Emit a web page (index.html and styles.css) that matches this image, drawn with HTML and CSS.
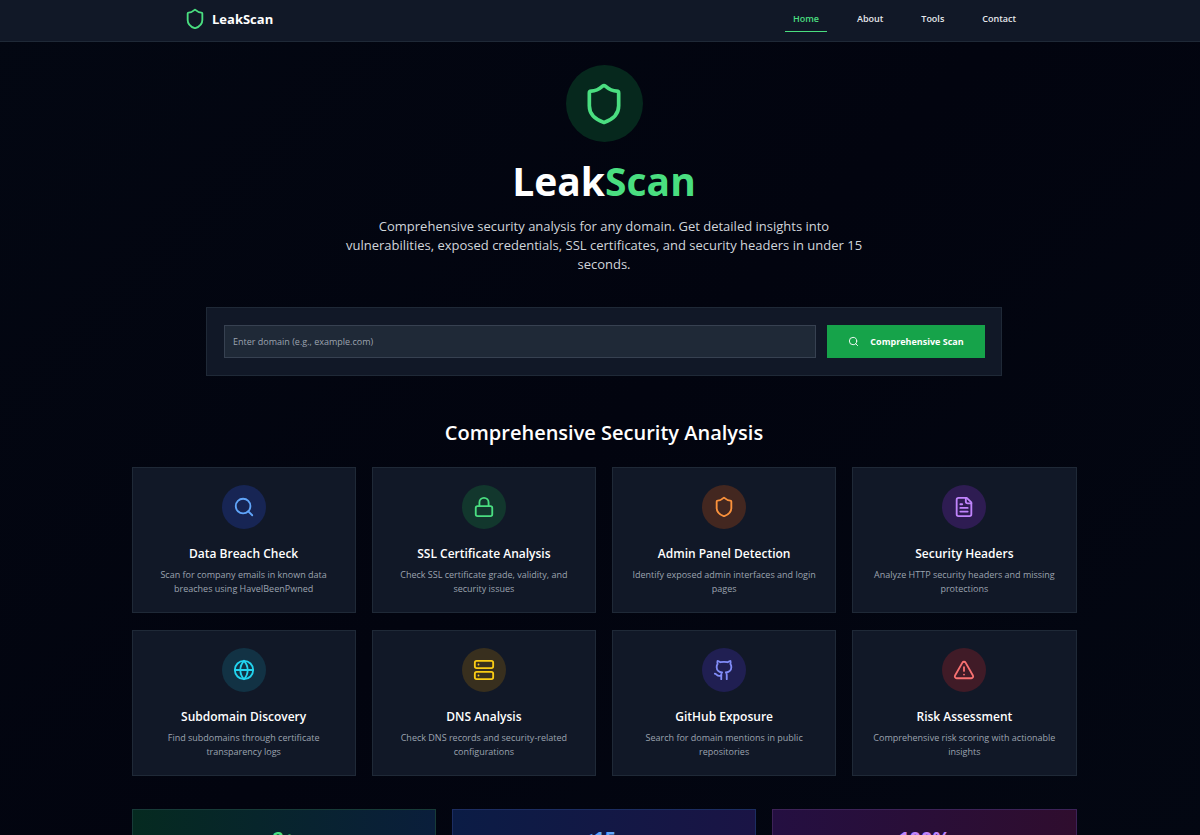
FILE: index.html
```html
<!DOCTYPE html>
<html lang="en">
<head>
<meta charset="utf-8">
<meta name="viewport" content="width=device-width, initial-scale=1">
<title>LeakScan</title>
<link rel="stylesheet" href="styles.css">
</head>
<body>
<header class="site-header">
  <div class="header-inner">
    <a class="brand" href="#"><svg class="icon brand-icon" viewBox="0 0 24 24"><use href="#shield"/></svg>LeakScan</a>
    <nav class="nav">
      <a class="nav-link active" href="#">Home</a>
      <a class="nav-link" href="#about">About</a>
      <a class="nav-link" href="#tools">Tools</a>
      <a class="nav-link" href="#contact">Contact</a>
    </nav>
  </div>
</header>

<main class="page">
  <section class="hero">
    <div class="hero-badge"><svg class="icon hero-icon" viewBox="0 0 24 24"><path id="shield" d="M20 13c0 5-3.5 7.5-7.66 8.95a1 1 0 0 1-.67-.01C7.5 20.5 4 18 4 13V6a1 1 0 0 1 1-1c2 0 4.500-1.200 6.240-2.720a1.170 1.170 0 0 1 1.520 0C14.510 3.810 17 5 19 5a1 1 0 0 1 1 1z"/></svg></div>
    <h1 class="hero-title">Leak<span class="accent">Scan</span></h1>
    <p class="hero-text">Comprehensive security analysis for any domain. Get detailed insights into vulnerabilities, exposed credentials, SSL certificates, and security headers in under 15 seconds.</p>
  </section>

  <form class="scan">
    <input class="scan-input" type="text" aria-label="Domain" placeholder="Enter domain (e.g., example.com)">
    <button class="scan-button" type="button"><svg class="icon scan-icon" viewBox="0 0 24 24"><circle cx="11" cy="11" r="8"/><path d="m21 21-4.300-4.300"/></svg>Comprehensive Scan</button>
  </form>

  <h2 class="section-title">Comprehensive Security Analysis</h2>
  <section class="features">
    <article class="card">
      <div class="badge blue"><svg class="icon" viewBox="0 0 24 24"><circle cx="11" cy="11" r="8"/><path d="m21 21-4.300-4.300"/></svg></div>
      <h3 class="card-title">Data Breach Check</h3>
      <p class="card-text">Scan for company emails in known data breaches using HaveIBeenPwned</p>
    </article>
    <article class="card">
      <div class="badge green"><svg class="icon" viewBox="0 0 24 24"><rect x="3" y="11" width="18" height="11" rx="2"/><path d="M7 11V7a5 5 0 0 1 10 0v4"/></svg></div>
      <h3 class="card-title">SSL Certificate Analysis</h3>
      <p class="card-text">Check SSL certificate grade, validity, and security issues</p>
    </article>
    <article class="card">
      <div class="badge orange"><svg class="icon" viewBox="0 0 24 24"><use href="#shield"/></svg></div>
      <h3 class="card-title">Admin Panel Detection</h3>
      <p class="card-text">Identify exposed admin interfaces and login pages</p>
    </article>
    <article class="card">
      <div class="badge purple"><svg class="icon" viewBox="0 0 24 24"><path d="M15 2H6a2 2 0 0 0-2 2v16a2 2 0 0 0 2 2h12a2 2 0 0 0 2-2V7Z"/><path d="M14 2v4a2 2 0 0 0 2 2h4M10 9H8M16 13H8M16 17H8"/></svg></div>
      <h3 class="card-title">Security Headers</h3>
      <p class="card-text">Analyze HTTP security headers and missing protections</p>
    </article>
    <article class="card">
      <div class="badge cyan"><svg class="icon" viewBox="0 0 24 24"><circle cx="12" cy="12" r="10"/><path d="M12 2a14.500 14.500 0 0 0 0 20 14.500 14.500 0 0 0 0-20M2 12h20"/></svg></div>
      <h3 class="card-title">Subdomain Discovery</h3>
      <p class="card-text">Find subdomains through certificate transparency logs</p>
    </article>
    <article class="card">
      <div class="badge yellow"><svg class="icon" viewBox="0 0 24 24"><rect x="2" y="2" width="20" height="8" rx="2"/><rect x="2" y="14" width="20" height="8" rx="2"/><path d="M6 6h.01M6 18h.01"/></svg></div>
      <h3 class="card-title">DNS Analysis</h3>
      <p class="card-text">Check DNS records and security-related configurations</p>
    </article>
    <article class="card">
      <div class="badge indigo"><svg class="icon" viewBox="0 0 24 24"><path d="M15 22v-4a4.800 4.800 0 0 0-1-3.500c3 0 6-2 6-5.500.080-1.250-.270-2.480-1-3.500.280-1.150.280-2.350 0-3.500 0 0-1 0-3 1.500-2.640-.500-5.360-.500-8 0C6 2 5 2 5 2c-.300 1.150-.300 2.350 0 3.500A5.403 5.403 0 0 0 4 9c0 3.500 3 5.500 6 5.500-.390.490-.680 1.050-.850 1.650-.170.600-.220 1.230-.150 1.850v4"/><path d="M9 18c-4.510 2-5-2-7-2"/></svg></div>
      <h3 class="card-title">GitHub Exposure</h3>
      <p class="card-text">Search for domain mentions in public repositories</p>
    </article>
    <article class="card">
      <div class="badge red"><svg class="icon" viewBox="0 0 24 24"><path d="m21.730 18-8-14a2 2 0 0 0-3.480 0l-8 14A2 2 0 0 0 4 21h16a2 2 0 0 0 1.730-3M12 9v4M12 17h.01"/></svg></div>
      <h3 class="card-title">Risk Assessment</h3>
      <p class="card-text">Comprehensive risk scoring with actionable insights</p>
    </article>
  </section>

  <section class="stats">
    <div class="stat stat-green">8+</div>
    <div class="stat stat-blue">&lt;15s</div>
    <div class="stat stat-purple">100%</div>
  </section>
</main>
</body>
</html>
```

FILE: styles.css
```css
* { box-sizing: border-box; }
html { background: #030712; scrollbar-width: none; }
body {
  margin: 0;
  color: #fff;
  font-family: "Open Sans", "Noto Sans", sans-serif;
  background: linear-gradient(135deg, #030712, #02040f 50%, #030712);
}
h1, h2, h3, p { margin: 0; }
a { color: inherit; text-decoration: none; }
.icon {
  width: 22px;
  height: 22px;
  fill: none;
  stroke: currentColor;
  stroke-width: 2;
  stroke-linecap: round;
  stroke-linejoin: round;
}
.site-header {
  height: 42px;
  padding: 0 0 3px 8px;
  background: #111827;
  border-bottom: 1px solid #1f2937;
}
.header-inner {
  display: flex;
  justify-content: space-between;
  align-items: center;
  max-width: 840px;
  height: 100%;
  margin: 0 auto;
}
.brand {
  display: flex;
  align-items: center;
  gap: 6px;
  font-size: 13px;
  font-weight: 700;
}
.brand-icon { color: #4ade80; }
.nav { display: flex; gap: 22px; }
.nav-link {
  padding: 0 8px;
  font-size: 9px;
  font-weight: 600;
  line-height: 25px;
  color: #e5e7eb;
  border-bottom: 1px solid transparent;
}
.nav-link.active { color: #4ade80; border-color: #4ade80; }

.page {
  width: 100%;
  max-width: 953px;
  margin: 0 auto;
  padding: 23px 0 0 8px;
}
.hero { text-align: center; }
.hero-badge {
  display: flex;
  align-items: center;
  justify-content: center;
  width: 77px;
  height: 77px;
  margin: 0 auto;
  border-radius: 50%;
  color: #4ade80;
  background: #06281d;
}
.hero-icon { width: 44px; height: 44px; }
.hero-title {
  margin-top: 15px;
  font-size: 39px;
  font-weight: 700;
  line-height: 48px;
}
.accent { color: #4ade80; }
.hero-text {
  max-width: 540px;
  margin: 12px auto 0;
  font-size: 13px;
  line-height: 19px;
  color: #d1d5db;
}
.scan {
  display: flex;
  gap: 11px;
  max-width: 796px;
  margin: 33px auto 0;
  padding: 17px 16px 17px 17px;
  background: #111827;
  border: 1px solid #1f2937;
}
.scan-input {
  flex: 1;
  min-width: 0;
  height: 33px;
  padding: 0 8px;
  font: 9px "Open Sans", "Noto Sans", sans-serif;
  color: #fff;
  background: #1f2937;
  border: 1px solid #374151;
  border-radius: 0;
}
.scan-input::placeholder { color: #9ca3af; opacity: 1; }
.scan-button {
  display: flex;
  align-items: center;
  justify-content: center;
  gap: 11px;
  width: 158px;
  height: 33px;
  padding: 0;
  font: 700 9px "Open Sans", "Noto Sans", sans-serif;
  color: #fff;
  background: #16a34a;
  border: 0;
}
.scan-icon { width: 11px; height: 11px; }
.section-title {
  margin-top: 42px;
  font-size: 20px;
  font-weight: 600;
  line-height: 30px;
  text-align: center;
}
.features {
  display: grid;
  grid-template-columns: repeat(4, 1fr);
  gap: 17px 16px;
  margin-top: 19px;
}
.card {
  padding: 17px 16px 16px;
  text-align: center;
  background: #111827;
  border: 1px solid #1f2937;
}
.badge {
  display: flex;
  align-items: center;
  justify-content: center;
  width: 44px;
  height: 44px;
  margin: 0 auto;
  border-radius: 50%;
}
.blue { color: #60a5fa; background: #172554; }
.green { color: #4ade80; background: #12372d; }
.orange { color: #fb923c; background: #432720; }
.purple { color: #c084fc; background: #2e1c52; }
.cyan { color: #22d3ee; background: #123244; }
.yellow { color: #facc15; background: #382f1e; }
.indigo { color: #818cf8; background: #201f52; }
.red { color: #f87171; background: #401b27; }
.card-title {
  margin-top: 15px;
  font-size: 12px;
  font-weight: 600;
  line-height: 20px;
}
.card-text {
  margin-top: 4px;
  font-size: 9px;
  line-height: 14px;
  color: #9ca3af;
}
.stats {
  display: grid;
  grid-template-columns: repeat(3, 1fr);
  gap: 16px;
  margin-top: 33px;
}
.stat {
  padding: 16px;
  font-size: 20px;
  font-weight: 700;
  line-height: 26px;
  text-align: center;
  border: 1px solid;
}
.stat-green { color: #4ade80; background: linear-gradient(to right, #052a20, #0a1e3b); border-color: #173b38; }
.stat-blue { color: #60a5fa; background: linear-gradient(to right, #0b1c45, #1a1445); border-color: #1c2d61; }
.stat-purple { color: #c084fc; background: linear-gradient(to right, #240f41, #2f0d2e); border-color: #3d2257; }
```
